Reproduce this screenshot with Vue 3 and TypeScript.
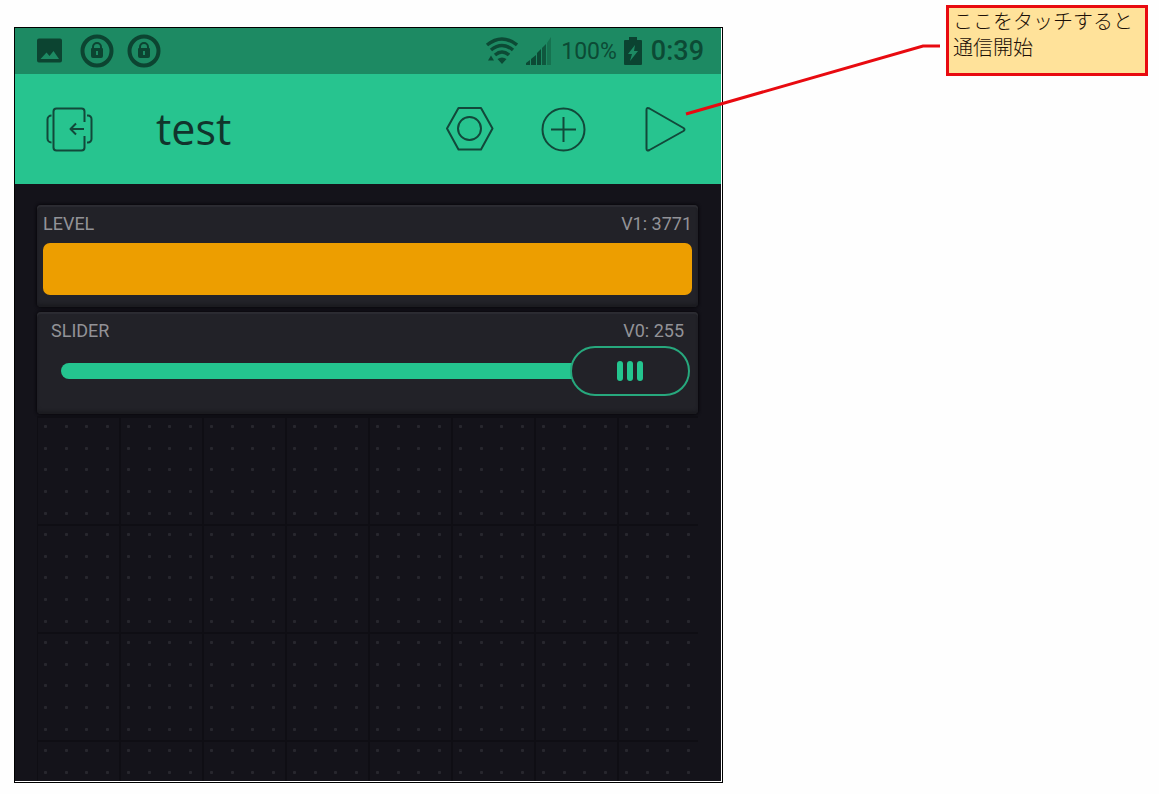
<script setup lang="ts">
import { computed, ref } from 'vue'

const projectName = ref('test')
const level = ref(3771)
const levelMax = 3771
const slider = ref(255)
const sliderMax = 255
const running = ref(false)

const levelWidth = computed(() => `${Math.min(100, (level.value / levelMax) * 100)}%`)
const sliderRatio = computed(() => Number(slider.value) / sliderMax)
const thumbLeft = computed(() => `calc((100% - 120px) * ${sliderRatio.value})`)
const trackWidth = computed(() => `calc((100% - 120px) * ${sliderRatio.value} + 4px)`)

const dotColumns = [8, 29, 49, 70]
const dotRows = [9, 31, 52, 74, 96]
</script>

<template>
  <main class="page">
    <section class="phone">
      <div class="status">
        <div class="status-left">
          <svg width="34" height="34" viewBox="0 0 34 34" aria-hidden="true">
            <path fill="#0c4431" fill-rule="evenodd" d="M6 4.500h21a2 2 0 0 1 2 2v20a2 2 0 0 1-2 2H6a2 2 0 0 1-2-2v-20a2 2 0 0 1 2-2zM7.500 25H26l-5.500-8-4 5-3-3.500z" />
          </svg>
          <svg v-for="n in 2" :key="n" width="34" height="34" viewBox="0 0 34 34" aria-hidden="true">
            <circle cx="17" cy="17" r="14.500" fill="none" stroke="#0c4431" stroke-width="4" />
            <path fill="none" stroke="#0c4431" stroke-width="2" d="M13 15v-2a4 4 0 0 1 8 0v2" />
            <path fill="#0c4431" fill-rule="evenodd" d="M12 14h10a1 1 0 0 1 1 1v7a2 2 0 0 1-2 2h-8a2 2 0 0 1-2-2v-7a1 1 0 0 1 1-1zM16 17v4h2v-4z" />
          </svg>
        </div>
        <div class="status-right">
          <svg width="34" height="30" viewBox="0 0 34 30" aria-hidden="true">
            <g fill="none" stroke="#0c4a35" stroke-width="3.500">
              <path d="M3 9Q18-3 33 9" />
              <path d="M7 14Q18 5 29 14" />
              <path d="M11 19Q18 13 25 19" />
            </g>
            <path fill="#0c4a35" d="M13.500 23Q18 20 22.500 23L18 28zM4 24.500l3-5 3 5z" />
          </svg>
          <svg class="signal" width="26" height="30" viewBox="0 0 26 30" aria-hidden="true">
            <path fill="#0c4a35" d="M1 29v-2l4-3v5zM6 29v-6l5-4v10zM12 29V17l4-4v16z" />
            <path fill="#0f573e" d="M17 29V12l4-4v21z" />
            <path fill="#167250" d="M22 29V7l4-6v28z" />
          </svg>
          <span class="percent">100%</span>
          <svg width="20" height="30" viewBox="0 0 20 30" aria-hidden="true">
            <path fill="#0b4331" fill-rule="evenodd" d="M5 1h8v3h4a1 1 0 0 1 1 1v23a1 1 0 0 1-1 1H1a1 1 0 0 1-1-1V5a1 1 0 0 1 1-1h4zM11 9l-7 9h4l-2 7 8-10h-4z" />
          </svg>
          <time class="clock">0:39</time>
        </div>
      </div>

      <header class="toolbar">
        <button type="button" aria-label="Exit project">
          <svg width="48" height="48" viewBox="0 0 48 48">
            <path d="M38.500 17V6.500a3 3 0 0 0-3-3h-25a3 3 0 0 0-3 3v36a3 3 0 0 0 3 3h25a3 3 0 0 0 3-3V31M38 24H25M30 18.500L24.500 24l5.500 5.500M5.500 10.500a4 4 0 0 0-4 4v19a4 4 0 0 0 4 4M41 10.500h1a3.500 3.500 0 0 1 3.500 3.500v20a3.500 3.500 0 0 1-3.500 3.500h-1" />
          </svg>
        </button>
        <h1>{{ projectName }}</h1>
        <div class="actions">
          <button type="button" aria-label="Project settings">
            <svg width="48" height="48" viewBox="0 0 48 48">
              <path d="M12.500 3h22.500L46.500 23.500 35 44.500H12.500L1 23.500z" />
              <circle cx="23.500" cy="23.500" r="11.500" />
            </svg>
          </button>
          <button type="button" aria-label="Add widget">
            <svg width="48" height="48" viewBox="0 0 48 48">
              <circle cx="23.500" cy="24.500" r="21" />
              <path d="M11 24.500h25M23.500 12v25" />
            </svg>
          </button>
          <button type="button" aria-label="Run project" :aria-pressed="running" @click="running = !running">
            <svg width="52" height="48" viewBox="0 0 52 48">
              <path d="M12.500 5v38.500q0 3 3 1.500l34-19q2-1.500 0-3l-34-19.500q-3-1.500-3 1.500z" />
            </svg>
          </button>
        </div>
      </header>

      <div class="board">
        <article class="card level">
          <div class="card-head">
            <span id="level-name">LEVEL</span>
            <span>V1: {{ level }}</span>
          </div>
          <div class="meter" role="meter" aria-labelledby="level-name" aria-valuemin="0" :aria-valuemax="levelMax" :aria-valuenow="level">
            <div class="meter-fill" :style="{ width: levelWidth }"></div>
          </div>
        </article>

        <article class="card slide">
          <div class="card-head">
            <label for="slider">SLIDER</label>
            <output for="slider">V0: {{ slider }}</output>
          </div>
          <div class="slider">
            <div class="track" :style="{ width: trackWidth }"></div>
            <div class="thumb" :style="{ left: thumbLeft }"><i></i><i></i><i></i></div>
            <input id="slider" v-model="slider" type="range" min="0" :max="sliderMax" />
          </div>
        </article>

        <svg class="canvas" aria-hidden="true">
          <defs>
            <pattern id="cell" x="-1" width="83" height="108" patternUnits="userSpaceOnUse">
              <path d="M0 1h83M1 0v108" stroke="#0f0e14" stroke-width="2" />
              <template v-for="y in dotRows" :key="y">
                <rect v-for="x in dotColumns" :key="x" :x="x" :y="y" width="3" height="3" rx="1" fill="#28272e" />
              </template>
            </pattern>
          </defs>
          <rect width="100%" height="100%" fill="url(#cell)" />
        </svg>
      </div>
    </section>

    <aside class="note">
      ここをタッチすると<br />通信開始
      <svg class="pointer" width="258" height="76" viewBox="0 0 258 76" aria-hidden="true">
        <path d="M1 72L238 4h17" fill="none" stroke="#e80a10" stroke-width="3" />
      </svg>
    </aside>
  </main>
</template>

<style>
body {
  margin: 0;
  background: #fefefe;
}
</style>

<style scoped>
.page {
  box-sizing: border-box;
  display: flex;
  align-items: flex-start;
  gap: 223px;
  min-height: 100vh;
  padding: 5px 11px 11px 14px;
  font-family: Roboto, "Noto Sans CJK JP", sans-serif;
}

.phone {
  box-sizing: border-box;
  display: flex;
  flex: 1;
  flex-direction: column;
  min-width: 0;
  min-height: calc(100vh - 38px);
  margin-top: 22px;
  padding: 0 1px 1px 0;
  border: 1px solid #000;
  background: #fff;
}

.status {
  box-sizing: border-box;
  display: flex;
  align-items: center;
  justify-content: space-between;
  height: 46px;
  padding: 0 17px 0 18px;
  background: #1d8a63;
  color: #0c4a35;
}

.status-left,
.status-right {
  display: flex;
  align-items: center;
}

.status-left {
  gap: 13px;
}

.status-right {
  gap: 7px;
}

.signal {
  margin-right: 3px;
}

.percent {
  font-size: 23px;
}

.clock {
  font-size: 27px;
  font-weight: 500;
}

svg {
  display: block;
}

.toolbar {
  display: flex;
  align-items: center;
  height: 110px;
  padding: 0 35px 0 31px;
  background: #27c48f;
  color: #12483a;
}

.toolbar h1 {
  margin: 0 0 0 62px;
  color: #11342c;
  font-family: "Open Sans", "Noto Sans", sans-serif;
  font-size: 43px;
  font-weight: 400;
  line-height: 56px;
}

.toolbar button {
  padding: 0;
  border: 0;
  background: none;
  color: inherit;
  cursor: pointer;
}

.toolbar button svg {
  fill: none;
  stroke: currentColor;
  stroke-width: 2;
  stroke-linejoin: round;
}

.actions {
  display: flex;
  gap: 46px;
  margin-left: auto;
}

.board {
  display: flex;
  flex: 1;
  flex-direction: column;
  padding: 21px 23px 0 22px;
  background: #14131a;
}

.card {
  border-radius: 4px;
  background: #222228;
  box-shadow: inset 0 2px 1px #2c2c32, inset 0 -3px 3px #1b1b20, 0 0 3px 1px #08070c;
  color: #929297;
  font-size: 18px;
  line-height: 22px;
}

.level {
  padding: 8px 6px 12px;
}

.slide {
  margin-top: 5px;
  padding: 8px 8px 18px 14px;
}

.card-head {
  display: flex;
  justify-content: space-between;
}

.slide .card-head {
  padding-right: 6px;
}

.meter {
  height: 52px;
  margin-top: 8px;
}

.meter-fill {
  height: 100%;
  border-radius: 7px;
  background: #ed9e00;
}

.slider {
  position: relative;
  display: flex;
  align-items: center;
  height: 50px;
  margin: 4px 0 0 10px;
}

.track {
  height: 16px;
  border-radius: 8px 0 0 8px;
  background: #24c58f;
}

.thumb {
  position: absolute;
  top: 0;
  box-sizing: border-box;
  display: flex;
  align-items: center;
  justify-content: center;
  gap: 4px;
  width: 120px;
  height: 50px;
  border: 2px solid #27a87d;
  border-radius: 26px;
  background: #222228;
}

.thumb i {
  width: 6px;
  height: 20px;
  border-radius: 3px;
  background: #24c58f;
}

.slider input {
  position: absolute;
  inset: 0;
  width: 100%;
  height: 100%;
  margin: 0;
  opacity: 0;
  cursor: pointer;
}

.canvas {
  flex: 1;
  width: 100%;
  min-height: 200px;
  margin-top: 2px;
}

.note {
  position: relative;
  box-sizing: border-box;
  flex: none;
  width: 202px;
  min-height: 71px;
  padding: 1px 4px;
  border: 3px solid #e80a10;
  background: #ffe29a;
  color: #1c1008;
  font-family: "Liberation Sans", "Noto Sans CJK JP", sans-serif;
  font-size: 20px;
  font-weight: 300;
  line-height: 26px;
}

.pointer {
  position: absolute;
  top: 34px;
  right: 202px;
  pointer-events: none;
}
</style>
